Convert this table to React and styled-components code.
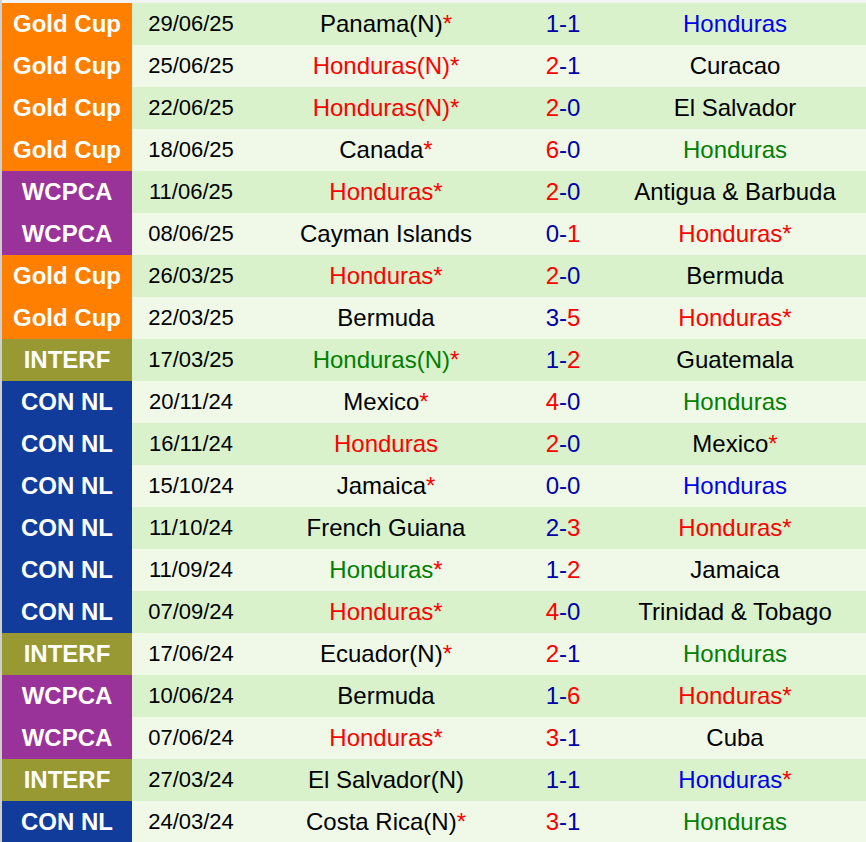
import styled, { createGlobalStyle } from "styled-components"

const GlobalStyle = createGlobalStyle`
    html, body {
        margin: 0;
        padding: 0;
        background: #f3f3f3;
    }
    body {
        font-family: "Liberation Sans", Arial, sans-serif;
    }
`

const compColors = {
    "Gold Cup": "#ff8000",
    "WCPCA": "#993399",
    "INTERF": "#999933",
    "CON NL": "#123c9c",
}

const toneColors = {
    win: "#ff0000",
    draw: "#0000ee",
    loss: "#008000",
    none: "#000000",
}

const partidas = [
    ["Gold Cup", "29/06/25", "Panama(N)", true, "none", "1-1", "Honduras", false, "draw"],
    ["Gold Cup", "25/06/25", "Honduras(N)", true, "win", "2-1", "Curacao", false, "none"],
    ["Gold Cup", "22/06/25", "Honduras(N)", true, "win", "2-0", "El Salvador", false, "none"],
    ["Gold Cup", "18/06/25", "Canada", true, "none", "6-0", "Honduras", false, "loss"],
    ["WCPCA", "11/06/25", "Honduras", true, "win", "2-0", "Antigua & Barbuda", false, "none"],
    ["WCPCA", "08/06/25", "Cayman Islands", false, "none", "0-1", "Honduras", true, "win"],
    ["Gold Cup", "26/03/25", "Honduras", true, "win", "2-0", "Bermuda", false, "none"],
    ["Gold Cup", "22/03/25", "Bermuda", false, "none", "3-5", "Honduras", true, "win"],
    ["INTERF", "17/03/25", "Honduras(N)", true, "loss", "1-2", "Guatemala", false, "none"],
    ["CON NL", "20/11/24", "Mexico", true, "none", "4-0", "Honduras", false, "loss"],
    ["CON NL", "16/11/24", "Honduras", false, "win", "2-0", "Mexico", true, "none"],
    ["CON NL", "15/10/24", "Jamaica", true, "none", "0-0", "Honduras", false, "draw"],
    ["CON NL", "11/10/24", "French Guiana", false, "none", "2-3", "Honduras", true, "win"],
    ["CON NL", "11/09/24", "Honduras", true, "loss", "1-2", "Jamaica", false, "none"],
    ["CON NL", "07/09/24", "Honduras", true, "win", "4-0", "Trinidad & Tobago", false, "none"],
    ["INTERF", "17/06/24", "Ecuador(N)", true, "none", "2-1", "Honduras", false, "loss"],
    ["WCPCA", "10/06/24", "Bermuda", false, "none", "1-6", "Honduras", true, "win"],
    ["WCPCA", "07/06/24", "Honduras", true, "win", "3-1", "Cuba", false, "none"],
    ["INTERF", "27/03/24", "El Salvador(N)", false, "none", "1-1", "Honduras", true, "draw"],
    ["CON NL", "24/03/24", "Costa Rica(N)", true, "none", "3-1", "Honduras", false, "loss"],
]

const Pagina = styled.div`
    padding: 3px 0 0 0;
    border-left: 2px solid #cfcfcf;
    width: 864px;
    height: 839px;
    overflow: hidden;
`

const Tabela = styled.div`
    display: flex;
    flex-direction: column;
`

const Linha = styled.div`
    display: grid;
    grid-template-columns: 130px 118px 272px 82px 262px;
    height: 42px;
    background: ${props => props.$alt ? "#f0f9e8" : "#d9f2cc"};
`

const Competicao = styled.div`
    display: flex;
    align-items: center;
    justify-content: center;
    background: ${props => compColors[props.$comp]};
    color: #fff;
    font-size: 24px;
    font-weight: 700;
`

const Celula = styled.div`
    display: flex;
    align-items: center;
    justify-content: center;
    font-size: 24px;
    color: #000;
    white-space: nowrap;
`

const Data = styled(Celula)`
    font-size: 22px;
`

const Time = styled.span`
    color: ${props => toneColors[props.$tone]};
`

const Asterisco = styled.span`
    color: #ff0000;
`

const Gol = styled.span`
    color: ${props => props.$maior ? "#ff0000" : "#0000aa"};
`

const Placar = ({ valor }) => {
    const [a, b] = valor.split("-").map(Number)
    return (
        <Celula>
            <Gol $maior={a > b}>{a}</Gol>
            <Gol>-</Gol>
            <Gol $maior={b > a}>{b}</Gol>
        </Celula>
    )
}

const Equipe = ({ nome, estrela, tom }) => (
    <Celula>
        <Time $tone={tom}>{nome}</Time>
        {estrela && <Asterisco>*</Asterisco>}
    </Celula>
)

const App = () => {
    return (
        <Pagina>
            <GlobalStyle />
            <Tabela>
                {partidas.map((p, i) => (
                    <Linha key={i} $alt={i % 2 === 1}>
                        <Competicao $comp={p[0]}>{p[0]}</Competicao>
                        <Data>{p[1]}</Data>
                        <Equipe nome={p[2]} estrela={p[3]} tom={p[4]} />
                        <Placar valor={p[5]} />
                        <Equipe nome={p[6]} estrela={p[7]} tom={p[8]} />
                    </Linha>
                ))}
            </Tabela>
        </Pagina>
    )
}

export default App
